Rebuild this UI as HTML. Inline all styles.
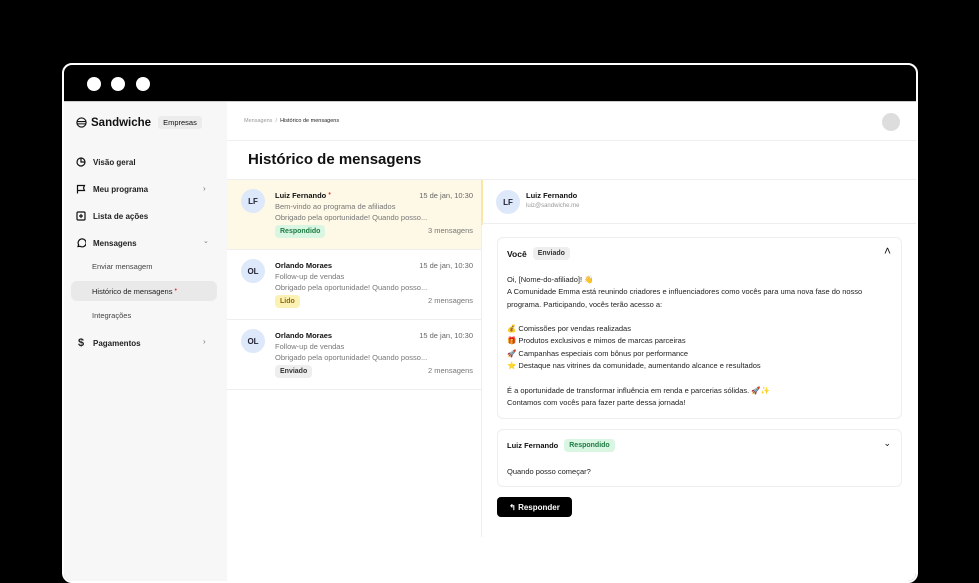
<!DOCTYPE html>
<html><head><meta charset="utf-8"><style>
*{box-sizing:border-box;margin:0;padding:0}
body{width:979px;height:557px;background:#000;position:relative;overflow:hidden;font-family:"Liberation Sans",sans-serif;color:#111}
.frame{position:absolute;left:62px;top:63px;width:856px;height:520px;border:2px solid #fff;border-radius:10px;background:#000;overflow:hidden}
.dot{position:absolute;top:12px;width:14px;height:14px;border-radius:50%;background:#fff}
.content{position:absolute;left:-2px;top:36px;width:856px;height:490px;background:#fff;border-top:1px solid #ccc}
.side{position:absolute;left:0;top:0;width:165px;height:100%;background:#f7f7f7}
.abs{position:absolute}
.nav{position:absolute;left:14px;font-size:8px;font-weight:bold;color:#222;display:flex;align-items:center;gap:7px}
.sub{position:absolute;left:30px;font-size:7.5px;color:#444}
.chev{position:absolute;left:141px;font-size:8px;color:#777}
.row{position:absolute;left:165px;width:255px;height:70px;border-bottom:1px solid #eee}
.av{position:absolute;width:24px;height:24px;border-radius:50%;background:#dde8fb;font-size:8px;font-weight:bold;display:flex;align-items:center;justify-content:center;color:#223}
.nm{position:absolute;left:48px;top:11px;font-size:7.5px;font-weight:bold}
.dt{position:absolute;right:9px;top:11px;font-size:7.5px;color:#666}
.l1{position:absolute;left:48px;top:22px;font-size:7.5px;color:#777}
.l2{position:absolute;left:48px;top:33px;font-size:7.5px;color:#777}
.cnt{position:absolute;right:9px;top:46px;font-size:7.5px;color:#777}
.badge{position:absolute;left:48px;top:45px;font-size:7px;font-weight:bold;padding:3px 5px;border-radius:4px}
.card{position:absolute;left:435px;width:405px;border:1px solid #eee;border-radius:6px;background:#fff}
.msg{font-size:7.5px;color:#222;line-height:12.3px}
</style></head><body>
<div class="frame">
<div class="dot" style="left:23px"></div><div class="dot" style="left:47px"></div><div class="dot" style="left:72px"></div>
<div class="content">
<div class="side">
<div class="abs" style="left:14px;top:14px;display:flex;align-items:center;gap:4px">
<svg width="11" height="11" viewBox="0 0 12 12"><circle cx="6" cy="6" r="5" fill="none" stroke="#111" stroke-width="1.3"/><line x1="1" y1="5" x2="11" y2="5" stroke="#111" stroke-width="1.2"/><line x1="1.5" y1="7.5" x2="10.5" y2="7.5" stroke="#111" stroke-width="1.2"/></svg>
<span style="font-size:11.5px;font-weight:bold">Sandwiche</span>
<span style="font-size:7.5px;background:#ececec;padding:2px 5px;border-radius:3px;margin-left:3px">Empresas</span></div>
<div class="nav" style="top:55px"><svg width="10" height="10" viewBox="0 0 10 10"><circle cx="5" cy="5" r="4" fill="none" stroke="#111" stroke-width="1.2"/><path d="M5 1V5H9" fill="none" stroke="#111" stroke-width="1.2"/></svg>Visão geral</div>
<div class="nav" style="top:82px"><svg width="10" height="10" viewBox="0 0 10 10"><path d="M1.5 9.5V1.5H8.5L7.5 4L8.5 6.5H1.5" fill="none" stroke="#111" stroke-width="1.2"/></svg>Meu programa</div><span class="chev" style="top:82px">›</span>
<div class="nav" style="top:109px"><svg width="10" height="10" viewBox="0 0 10 10"><rect x="1" y="1" width="8" height="8" rx="1" fill="none" stroke="#111" stroke-width="1.2"/><path d="M5 3V7M3 5H7" stroke="#111" stroke-width="1.2"/></svg>Lista de ações</div>
<div class="nav" style="top:136px"><svg width="10" height="10" viewBox="0 0 10 10"><path d="M2 8.5L2.6 6.8A4 4 0 1 1 4 8.3Z" fill="none" stroke="#111" stroke-width="1.2"/></svg>Mensagens</div><span class="chev" style="top:135px;font-size:7px">⌄</span>
<div class="sub" style="top:160px">Enviar mensagem</div>
<div class="abs" style="left:9px;top:179px;width:146px;height:20px;background:#e9e9e9;border-radius:6px"></div>
<div class="sub" style="top:185px;color:#222">Histórico de mensagens <span style="color:#e33;font-size:7px;vertical-align:top">•</span></div>
<div class="sub" style="top:209px">Integrações</div>
<div class="nav" style="top:235px"><span style="font-size:11px;width:10px;text-align:center">$</span>Pagamentos</div><span class="chev" style="top:235px">›</span>
</div>
<div class="abs" style="left:165px;top:0;width:691px;height:39px;border-bottom:1px solid #eee"></div>
<div class="abs" style="left:182px;top:16px;font-size:5.5px;color:#999">Mensagens &nbsp;/&nbsp; <span style="color:#222">Histórico de mensagens</span></div>
<div class="abs" style="left:820px;top:11px;width:18px;height:18px;border-radius:50%;background:#ddd"></div>
<div class="abs" style="left:186px;top:49px;font-size:15px;font-weight:bold">Histórico de mensagens</div>
<div class="abs" style="left:165px;top:77px;width:691px;border-top:1px solid #eee"></div>
<div class="row" style="top:78px;background:#fdf9e6">
<div class="av" style="left:14px;top:9px">LF</div><div class="nm">Luiz Fernando <span style="color:#e33;font-size:7px;vertical-align:top">•</span></div><div class="dt">15 de jan, 10:30</div>
<div class="l1">Bem-vindo ao programa de afiliados</div><div class="l2">Obrigado pela oportunidade! Quando posso...</div>
<div class="badge" style="background:#d8f6e2;color:#1f7a43">Respondido</div><div class="cnt">3 mensagens</div></div>
<div class="row" style="top:148px">
<div class="av" style="left:14px;top:9px">OL</div><div class="nm">Orlando Moraes</div><div class="dt">15 de jan, 10:30</div>
<div class="l1">Follow-up de vendas</div><div class="l2">Obrigado pela oportunidade! Quando posso...</div>
<div class="badge" style="background:#fbf1b5;color:#8a6a00">Lido</div><div class="cnt">2 mensagens</div></div>
<div class="row" style="top:218px">
<div class="av" style="left:14px;top:9px">OL</div><div class="nm">Orlando Moraes</div><div class="dt">15 de jan, 10:30</div>
<div class="l1">Follow-up de vendas</div><div class="l2">Obrigado pela oportunidade! Quando posso...</div>
<div class="badge" style="background:#eee;color:#333">Enviado</div><div class="cnt">2 mensagens</div></div>
<div class="abs" style="left:419px;top:78px;height:357px;border-left:1px solid #eee"></div>
<div class="abs" style="left:419px;top:78px;height:45px;border-left:2px solid #fbe6a6"></div>
<div class="abs" style="left:420px;top:121px;width:436px;border-top:1px solid #eee"></div>
<div class="av" style="left:434px;top:88px">LF</div>
<div class="abs" style="left:464px;top:89px;font-size:7.5px;font-weight:bold">Luiz Fernando</div>
<div class="abs" style="left:464px;top:101px;font-size:6px;color:#999">luiz@sandwiche.me</div>
<div class="card" style="top:135px;height:182px">
<div class="abs" style="left:9px;top:9px;font-size:8.5px;font-weight:bold;display:flex;align-items:center;gap:6px">Você <span style="font-size:7px;background:#eee;padding:3px 5px;border-radius:4px;color:#333">Enviado</span></div>
<div class="abs" style="right:10px;top:6px;font-size:12px">˄</div>
<div class="abs msg" style="left:9px;top:36px">Oi, [Nome-do-afiliado]! 👋<br>A Comunidade Emma está reunindo criadores e influenciadores como vocês para uma nova fase do nosso<br>programa. Participando, vocês terão acesso a:<br><br>💰 Comissões por vendas realizadas<br>🎁 Produtos exclusivos e mimos de marcas parceiras<br>🚀 Campanhas especiais com bônus por performance<br>⭐ Destaque nas vitrines da comunidade, aumentando alcance e resultados<br><br>É a oportunidade de transformar influência em renda e parcerias sólidas. 🚀✨<br>Contamos com vocês para fazer parte dessa jornada!</div>
</div>
<div class="card" style="top:327px;height:58px">
<div class="abs" style="left:9px;top:9px;font-size:7.5px;font-weight:bold;display:flex;align-items:center;gap:6px">Luiz Fernando <span style="font-size:7px;background:#d8f6e2;color:#1f7a43;padding:3px 5px;border-radius:4px">Respondido</span></div>
<div class="abs" style="right:10px;top:8px;font-size:9px">⌄</div>
<div class="abs msg" style="left:9px;top:36px">Quando posso começar?</div>
</div>
<div class="abs" style="left:435px;top:395px;width:75px;height:20px;background:#000;border-radius:4px;color:#fff;font-size:8px;font-weight:bold;display:flex;align-items:center;justify-content:center;gap:6px">↰ Responder</div>
</div></div>
</body></html>
